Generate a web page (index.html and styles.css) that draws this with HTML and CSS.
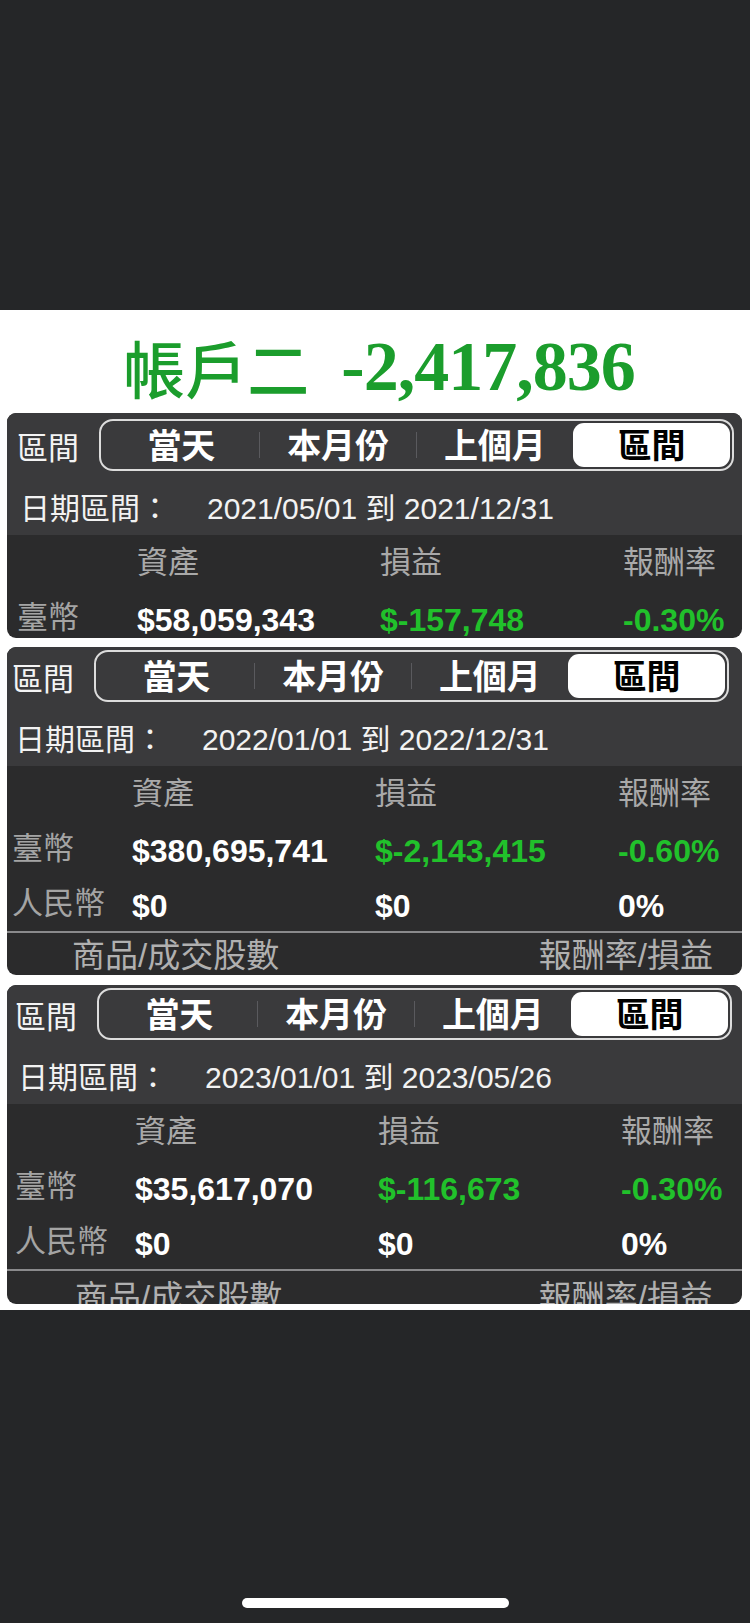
FILE: index.html
```html
<!DOCTYPE html>
<html lang="zh-Hant">
<head>
<meta charset="utf-8">
<title>帳戶二</title>
<link rel="stylesheet" href="styles.css">
</head>
<body>
<div class="screen">
  <div class="top-bar"></div>
  <main class="sheet">
    <h1 class="title"><span class="title-cjk">帳戶二</span><span class="title-num">-2,417,836</span></h1>

    <section class="card card-1">
      <div class="card-head">
        <div class="seg-row">
          <span class="seg-label">區間</span>
          <div class="seg">
            <span class="seg-item">當天</span>
            <span class="seg-item">本月份</span>
            <span class="seg-item seg-item-last">上個月</span>
            <span class="seg-item seg-selected">區間</span>
          </div>
        </div>
        <div class="date-row"><span class="date-label">日期區間：</span><span class="date-val">2021/05/01 到 2021/12/31</span></div>
      </div>
      <div class="table">
        <div class="row row-head"><span></span><span>資產</span><span>損益</span><span>報酬率</span></div>
        <div class="row"><span class="cur">臺幣</span><span class="val">$58,059,343</span><span class="val green">$-157,748</span><span class="val green">-0.30%</span></div>
      </div>
    </section>

    <section class="card card-2">
      <div class="card-head">
        <div class="seg-row">
          <span class="seg-label">區間</span>
          <div class="seg">
            <span class="seg-item">當天</span>
            <span class="seg-item">本月份</span>
            <span class="seg-item seg-item-last">上個月</span>
            <span class="seg-item seg-selected">區間</span>
          </div>
        </div>
        <div class="date-row"><span class="date-label">日期區間：</span><span class="date-val">2022/01/01 到 2022/12/31</span></div>
      </div>
      <div class="table">
        <div class="row row-head"><span></span><span>資產</span><span>損益</span><span>報酬率</span></div>
        <div class="row"><span class="cur">臺幣</span><span class="val">$380,695,741</span><span class="val green">$-2,143,415</span><span class="val green">-0.60%</span></div>
        <div class="row"><span class="cur">人民幣</span><span class="val">$0</span><span class="val">$0</span><span class="val">0%</span></div>
      </div>
      <div class="foot"><span>商品/成交股數</span><span>報酬率/損益</span></div>
    </section>

    <section class="card card-3">
      <div class="card-head">
        <div class="seg-row">
          <span class="seg-label">區間</span>
          <div class="seg">
            <span class="seg-item">當天</span>
            <span class="seg-item">本月份</span>
            <span class="seg-item seg-item-last">上個月</span>
            <span class="seg-item seg-selected">區間</span>
          </div>
        </div>
        <div class="date-row"><span class="date-label">日期區間：</span><span class="date-val">2023/01/01 到 2023/05/26</span></div>
      </div>
      <div class="table">
        <div class="row row-head"><span></span><span>資產</span><span>損益</span><span>報酬率</span></div>
        <div class="row"><span class="cur">臺幣</span><span class="val">$35,617,070</span><span class="val green">$-116,673</span><span class="val green">-0.30%</span></div>
        <div class="row"><span class="cur">人民幣</span><span class="val">$0</span><span class="val">$0</span><span class="val">0%</span></div>
      </div>
      <div class="foot foot-cut"><span>商品/成交股數</span><span>報酬率/損益</span></div>
    </section>
  </main>
  <div class="bottom-bar"><div class="home-indicator"></div></div>
</div>
</body>
</html>
```

FILE: styles.css
```css
* { box-sizing: border-box; }

html, body {
  margin: 0;
  padding: 0;
  background: #252628;
}

body {
  font-family: "Liberation Sans", "Noto Sans CJK TC", sans-serif;
  color: #f2f2f2;
}

.screen {
  width: 750px;
  height: 1623px;
  display: flex;
  flex-direction: column;
  overflow: hidden;
}

.top-bar {
  height: 310px;
  background: #252628;
  flex: none;
}

.sheet {
  height: 1000px;
  flex: none;
  background: #ffffff;
  display: flex;
  flex-direction: column;
}

.title {
  margin: 0;
  height: 103px;
  padding: 10px 0 0 8px;
  display: flex;
  align-items: center;
  justify-content: center;
  color: #1b9d2c;
  font-weight: bold;
  line-height: 1;
}

.title-cjk {
  font-family: "Noto Sans CJK TC", sans-serif;
  font-size: 62px;
  font-weight: 500;
}

.title-num {
  margin-left: 32px;
  font-family: "Liberation Serif", serif;
  font-size: 70px;
  font-weight: bold;
  letter-spacing: -1px;
}

.card {
  margin-left: 7px;
  width: 735px;
  border-radius: 9px;
  background: #2b2b2c;
  overflow: hidden;
  flex: none;
}

.card-1 { height: 225px; }
.card-2 { height: 328px; margin-top: 9px; }
.card-3 { height: 319px; margin-top: 10px; }

.card-head {
  background: #3a3a3c;
  padding-top: 6px;
}

.card-2 .card-head,
.card-3 .card-head { padding-top: 3px; }

.card-1 .card-head, .card-1 .table { padding-left: 10px; }
.card-2 .card-head, .card-2 .table, .card-2 .foot { padding-left: 5px; }
.card-3 .card-head, .card-3 .table, .card-3 .foot { padding-left: 8px; }

.seg-row {
  display: flex;
  align-items: center;
  height: 52px;
}

.seg-label {
  width: 60px;
  font-size: 31px;
  line-height: 1;
  padding-top: 6px;
  color: #f4f4f4;
  white-space: nowrap;
}

.seg {
  margin-left: 22px;
  width: 635px;
  height: 52px;
  border: 2px solid #dcdcdc;
  border-radius: 14px;
  display: grid;
  grid-template-columns: repeat(4, 1fr);
  padding: 2px;
}

.seg-item {
  display: flex;
  align-items: center;
  justify-content: center;
  font-size: 34px;
  font-weight: bold;
  line-height: 1;
  color: #ffffff;
  padding-top: 1px;
  position: relative;
}

.seg-item::after {
  content: "";
  position: absolute;
  right: 0;
  top: 9px;
  bottom: 9px;
  width: 1px;
  background: #5a5a5e;
}

.seg-item-last::after,
.seg-selected::after { display: none; }

.seg-selected {
  background: #ffffff;
  color: #000000;
  border-radius: 11px;
}

.date-row {
  height: 64px;
  padding: 12px 0 0 3px;
  display: flex;
  align-items: center;
  font-size: 30px;
  line-height: 52px;
  color: #f2f2f2;
}

.date-val {
  margin-left: 37px;
}

.table {
  display: flex;
  flex-direction: column;
}

.row {
  height: 55px;
  display: grid;
  grid-template-columns: 120px 243px 243px auto;
  align-items: center;
  font-size: 31px;
  line-height: 1;
}

.row-head {
  color: #a9a9a9;
}

.cur {
  color: #a4a4a4;
  white-space: nowrap;
}

.val {
  font-weight: bold;
  font-size: 32px;
  color: #ffffff;
  padding-top: 4px;
  white-space: nowrap;
}

.val.green {
  color: #21c12b;
}

.foot {
  border-top: 2px solid #8a8a8c;
  height: 42px;
  display: flex;
  justify-content: space-between;
  align-items: center;
  padding-right: 29px;
  padding-top: 4px;
  font-size: 33px;
  line-height: 1;
  color: #b0b0b0;
}

.foot-cut {
  align-items: flex-start;
  height: 48px;
  padding-top: 10px;
}

.foot span:first-child {
  margin-left: 60px;
}

.bottom-bar {
  flex: 1;
  background: #252628;
  display: flex;
  justify-content: center;
  padding-top: 288px;
}

.home-indicator {
  width: 267px;
  height: 10px;
  border-radius: 5px;
  background: #ffffff;
}
```
